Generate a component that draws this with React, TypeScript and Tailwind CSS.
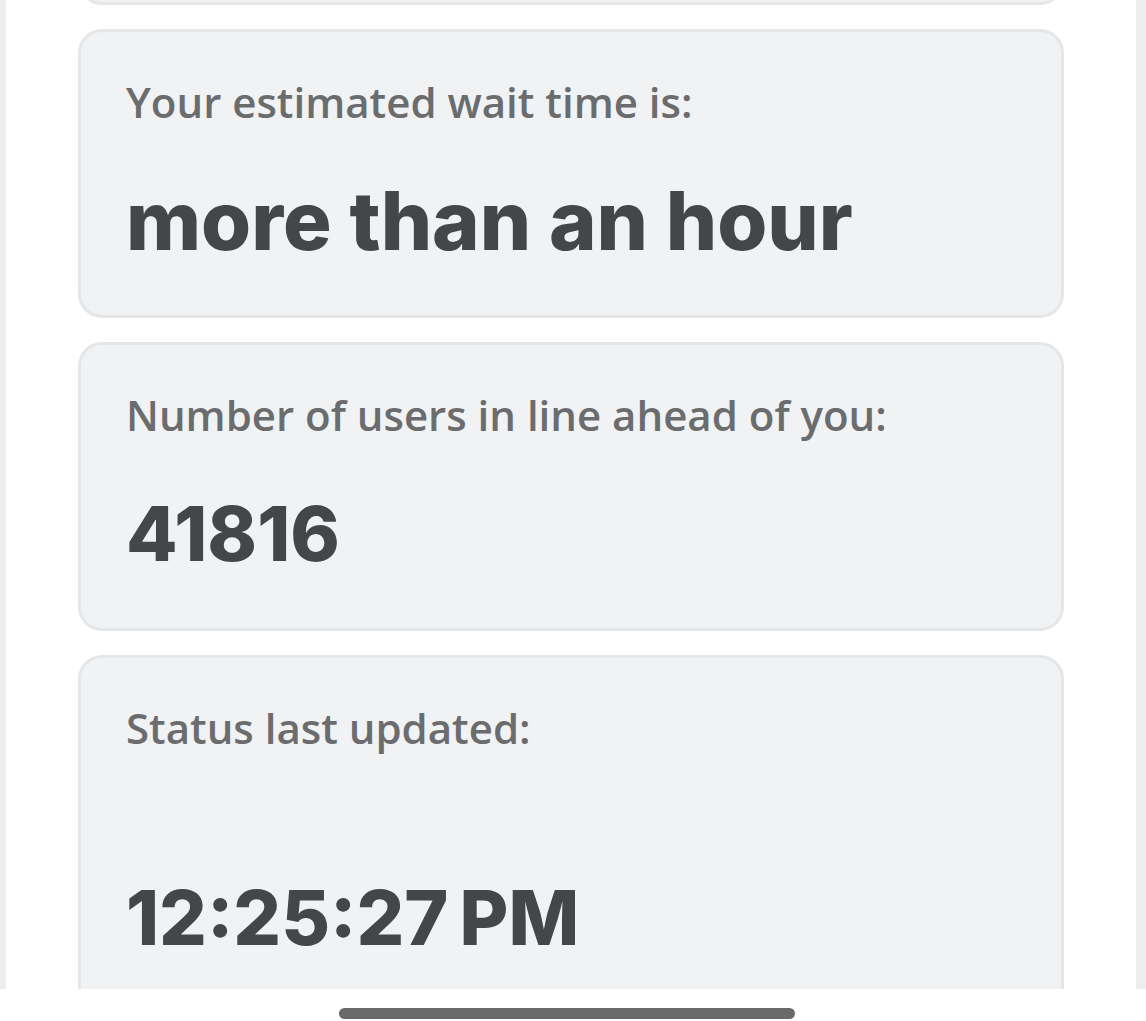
import React from 'react';
import clsx from 'clsx';

interface Status {
  label: string;
  value: string;
  numeric?: boolean;
  spaced?: boolean;
}

const statuses: Status[] = [
  { label: 'Your estimated wait time is:', value: 'more than an hour' },
  { label: 'Number of users in line ahead of you:', value: '41816', numeric: true },
  { label: 'Status last updated:', value: '12:25:27\u2009PM', numeric: true, spaced: true },
];

const StatusCard: React.FC<Status> = ({ label, value, numeric, spaced }) => (
  <div className="shrink-0 rounded-3xl border-3 border-[#e5e6e8] bg-[#f1f2f4] px-[45px] pt-10 pb-[46px]">
    <dt className="font-['Open_Sans','Noto_Sans',sans-serif] text-[42px] leading-[60px] font-semibold text-[#6b6c6e]">
      {label}
    </dt>
    <dd
      className={clsx(
        "font-['Inter',sans-serif] leading-[96px] font-extrabold whitespace-nowrap text-[#454648]",
        numeric ? 'text-[75px]' : 'text-[81px]',
        spaced ? 'mt-[112px]' : 'mt-[41px]',
      )}
    >
      {value}
    </dd>
  </div>
);

const App: React.FC = () => (
  <div className="flex h-screen flex-col bg-white">
    <main className="min-h-0 flex-1 overflow-hidden border-r-10 border-l-6 border-[#ededed] px-[72px]">
      <div className="-mt-[91px] h-24 rounded-3xl border-3 border-[#e5e6e8] bg-[#f1f2f4]" />
      <dl className="mt-6 flex flex-col gap-6">
        {statuses.map((status) => (
          <StatusCard key={status.label} {...status} />
        ))}
      </dl>
    </main>
    <footer className="flex h-8 shrink-0 justify-center bg-white pt-[19px] pr-3">
      <div className="h-[11px] w-[456px] rounded-full bg-[#6a6a6a]" />
    </footer>
  </div>
);

export default App;
